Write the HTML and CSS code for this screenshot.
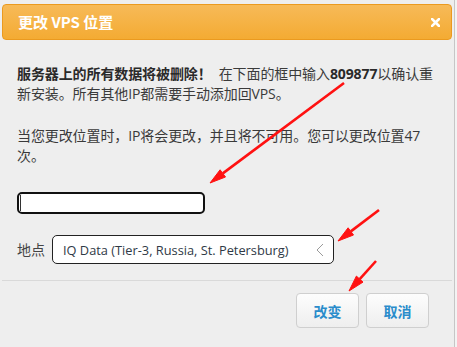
FILE: index.html
```html
<!DOCTYPE html>
<html lang="zh">
<head>
<meta charset="utf-8">
<title>更改 VPS 位置</title>
<link rel="stylesheet" href="styles.css">
</head>
<body>
<div class="dialog">
  <div class="header">
    <span class="title">更改 VPS 位置</span>
    <svg class="close" width="9" height="9" viewBox="0 0 9 9"><path d="M1 1L8 8M8 1L1 8" stroke="#fff" stroke-width="2.6" stroke-linecap="square"/></svg>
  </div>
  <div class="body">
    <p class="para"><b class="warn">服务器上的所有数据将被删除！</b>&nbsp; 在下面的框中输入<b>809877</b>以确认重新安装。所有其他IP都需要手动添加回VPS。</p>
    <p class="para">当您更改位置时，IP将会更改，并且将不可用。您可以更改位置47<br>次。</p>
    <input class="confirm" type="text">
    <div class="loc-row">
      <span class="loc-label">地点</span>
      <div class="select">
        <span class="select-text">IQ Data (Tier-3, Russia, St. Petersburg)</span>
        <svg class="chev" width="8" height="14" viewBox="0 0 8 14"><path d="M7 1L1 7L7 13" fill="none" stroke="#9a9a9a" stroke-width="1"/></svg>
      </div>
    </div>
  </div>
  <div class="footer">
    <button class="btn">改变</button>
    <button class="btn">取消</button>
  </div>
</div>
<svg class="arrows" width="457" height="347" viewBox="0 0 457 347">
  <g stroke="#ff1111" stroke-width="2.6" fill="#ff1111">
    <line x1="344" y1="83" x2="222.8" y2="173.4"/>
    <polygon points="210,183 225.5,177 220.1,169.8" stroke-width="1"/>
    <line x1="379" y1="210" x2="350.8" y2="231.4"/>
    <polygon points="338,241 353.5,235 348.1,227.8" stroke-width="1"/>
    <line x1="376" y1="261" x2="359.7" y2="279.1"/>
    <polygon points="349,291 363,282.1 356.4,276.1" stroke-width="1"/>
  </g>
</svg>
</body>
</html>
```
FILE: styles.css
```css
html, body {
  margin: 0;
  padding: 0;
}
body {
  background: #f3f3f3;
  width: 457px;
  height: 347px;
  overflow: hidden;
  position: relative;
  font-family: "Open Sans", "Noto Sans CJK SC", sans-serif;
  color: #333;
}
.dialog {
  width: 450px;
  height: 343px;
  padding: 4px 2px 0 2px;
  background: #eeeeee;
  border-right: 1px solid #c6c6c6;
}
.header {
  height: 34px;
  border: 1px solid #eb9a1f;
  border-radius: 4px;
  background: linear-gradient(#f7ba58, #f4ab33);
  display: flex;
  align-items: center;
  justify-content: space-between;
  padding: 0 11px 0 15px;
}
.title {
  color: #fff;
  font-family: "Noto Sans CJK SC", sans-serif;
  font-weight: bold;
  font-size: 15px;
  line-height: 20px;
  margin-top: -1px;
}
.close {
  display: block;
  margin-top: 1px;
}
.body {
  padding: 24px 15px 0 15px;
}
.para {
  margin: 0 0 22px 0;
  font-size: 14px;
  line-height: 20px;
  color: #3a3a3a;
  letter-spacing: -0.1px;
}
.para:nth-of-type(2) {
  margin-bottom: 26px;
}
.para b {
  font-weight: bold;
  color: #2a2a2a;
}
.confirm {
  display: block;
  box-sizing: border-box;
  width: 188px;
  height: 22px;
  border: 2px solid #111;
  border-radius: 5px;
  background: #fff linear-gradient(#333, #333) no-repeat 1px 1px / 1px 16px;
  margin: 0;
  padding: 0;
  outline: none;
}
.loc-row {
  display: flex;
  align-items: center;
  margin-top: 21px;
}
.loc-label {
  font-family: "Noto Sans CJK SC", sans-serif;
  font-size: 14px;
  color: #444;
  width: 35px;
  margin-top: -2px;
}
.select {
  box-sizing: border-box;
  width: 282px;
  height: 29px;
  border: 1px solid #222;
  border-radius: 5px;
  background: #fff;
  display: flex;
  align-items: center;
  justify-content: space-between;
  padding: 0 9px 0 10px;
}
.select-text {
  font-family: "Open Sans", sans-serif;
  font-size: 12.8px;
  color: #2f3a46;
  white-space: nowrap;
}
.chev {
  display: block;
}
.footer {
  margin-top: 16px;
  border-top: 1px solid #d9d9d9;
  display: flex;
  justify-content: flex-end;
  gap: 7px;
  padding: 12px 23px 0 0;
}
.btn {
  width: 63px;
  height: 35px;
  border: 1px solid #cfcfcf;
  border-radius: 4px;
  background: linear-gradient(#fdfdfd, #eeeeee);
  color: #2a8ccb;
  font-family: "Noto Sans CJK SC", sans-serif;
  font-weight: bold;
  font-size: 14px;
  padding: 0;
  margin: 0;
}
.arrows {
  position: absolute;
  left: 0;
  top: 0;
  pointer-events: none;
}
```
